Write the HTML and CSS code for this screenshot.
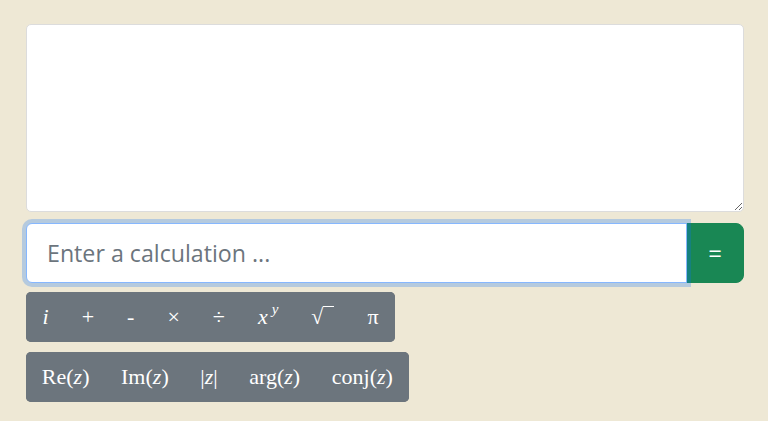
FILE: index.html
```html
<!DOCTYPE html>
<html lang="en">
<head>
<meta charset="utf-8">
<title>Complex Calculator</title>
<link rel="stylesheet" href="styles.css">
</head>
<body>
<main class="calc">
  <textarea class="output" readonly></textarea>
  <div class="input-group">
    <input class="entry focused" type="text" placeholder="Enter a calculation ...">
    <button class="btn-eq" type="button">=</button>
  </div>
  <div class="btn-group ops">
    <button class="key" type="button"><i>i</i></button>
    <button class="key" type="button">+</button>
    <button class="key" type="button">-</button>
    <button class="key" type="button">×</button>
    <button class="key" type="button">÷</button>
    <button class="key" type="button"><i>x</i><sup class="sup"><i>y</i></sup></button>
    <button class="key" type="button"><span class="sqrt">√<span class="bar"></span></span></button>
    <button class="key" type="button">π</button>
  </div>
  <div class="btn-group funcs">
    <button class="key" type="button">Re(<i>z</i>)</button>
    <button class="key" type="button">Im(<i>z</i>)</button>
    <button class="key" type="button">|<i>z</i>|</button>
    <button class="key" type="button">arg(<i>z</i>)</button>
    <button class="key" type="button">conj(<i>z</i>)</button>
  </div>
</main>
</body>
</html>
```

FILE: styles.css
```css
html, body {
  margin: 0;
  padding: 0;
  background: #eee8d5;
  height: 100%;
}

.calc {
  display: flex;
  flex-direction: column;
  align-items: flex-start;
  padding: 24px 24px 0 26px;
  font-family: "Open Sans", "Liberation Sans", sans-serif;
}

.output {
  box-sizing: border-box;
  width: 100%;
  height: 188px;
  margin: 0;
  border: 1px solid #dcdcdc;
  border-radius: 5px;
  background: #fff;
  resize: vertical;
  outline: none;
}

.input-group {
  display: flex;
  width: 100%;
  height: 60px;
  margin-top: 11px;
}

.entry {
  position: relative;
  z-index: 2;
  flex: 1 1 auto;
  min-width: 0;
  box-sizing: border-box;
  height: 60px;
  margin: 0;
  padding: 0 20px;
  border: 1px solid #86b7fe;
  border-radius: 6px 0 0 6px;
  background: #fff;
  font-family: "Open Sans", "Liberation Sans", sans-serif;
  font-size: 23.2px;
  color: #212529;
  outline: none;
}

.entry::placeholder {
  color: #6c757d;
  opacity: 1;
}

.entry.focused {
  box-shadow: 0 0 0 4px rgba(13, 110, 253, 0.25);
}

.btn-eq {
  flex: 0 0 auto;
  width: 58px;
  height: 60px;
  margin: 0 0 0 -1px;
  padding: 0;
  border: 1px solid #198754;
  border-radius: 0 8px 8px 0;
  background: #198754;
  color: #fff;
  font-family: "Open Sans", "Liberation Sans", sans-serif;
  font-size: 24px;
  line-height: 1;
}

.btn-group {
  display: inline-flex;
  margin-top: 9px;
  border-radius: 5px;
  overflow: hidden;
  background: #6c757d;
}

.btn-group + .btn-group {
  margin-top: 10px;
}

.key {
  height: 50px;
  margin: 0;
  padding: 0 16px;
  border: 0;
  background: #6c757d;
  color: #fff;
  font-family: "Liberation Serif", "DejaVu Serif", serif;
  font-size: 22px;
  line-height: 1;
  white-space: nowrap;
}

.ops .key {
  padding: 0 16.5px;
}

.funcs .key {
  padding: 0 15.8px;
}

.key i {
  font-style: italic;
}

.sup {
  font-size: 15px;
  vertical-align: 10px;
  line-height: 0;
  margin-left: 4px;
}

.sqrt {
  display: inline-flex;
  align-items: flex-start;
}

.bar {
  display: inline-block;
  width: 11px;
  height: 1px;
  margin-top: 0;
  background: #fff;
}
```
